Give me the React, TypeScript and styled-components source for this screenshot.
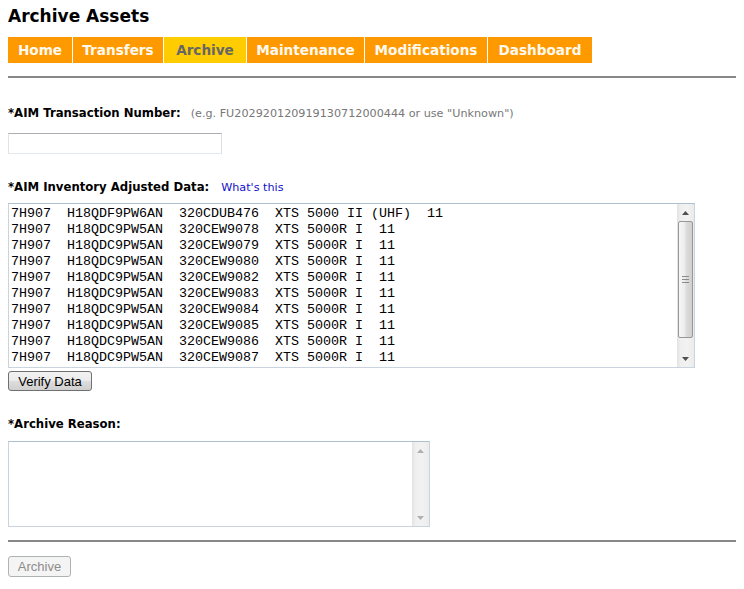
import React from "react";
import styled, { createGlobalStyle } from "styled-components";

const GlobalStyle = createGlobalStyle`
  html, body { background: #ffffff; }
  body {
    margin: 8px;
    font-family: "DejaVu Sans", Verdana, sans-serif;
    color: #000;
  }
`;

const Page = styled.div`
  display: flex;
  flex-direction: column;
  align-items: flex-start;
`;

const Title = styled.h1`
  margin: 0;
  font-size: 17px;
  line-height: 16px;
  font-weight: bold;
`;

const Nav = styled.nav`
  display: flex;
  margin-top: 13px;
  gap: 1px;
  background: #ffffff;
`;

const NavItem = styled.a<{ $active?: boolean; $w: number }>`
  display: block;
  width: ${(p) => p.$w}px;
  box-sizing: border-box;
  text-align: center;
  height: 26px;
  line-height: 26px;
  font-size: 13.6px;
  font-weight: bold;
  text-decoration: none;
  background: ${(p) => (p.$active ? "#ffcc00" : "#ff9900")};
  color: ${(p) => (p.$active ? "#666666" : "#fffaf0")};
  white-space: nowrap;
`;

const Rule = styled.div<{ $top: number }>`
  align-self: stretch;
  height: 2px;
  background: #888888;
  margin-top: ${(p) => p.$top}px;
`;

const Label = styled.div<{ $top: number }>`
  display: flex;
  align-items: baseline;
  margin-top: ${(p) => p.$top}px;
  height: 16px;
  line-height: 16px;
`;

const LabelText = styled.span`
  font-weight: bold;
  font-size: 11.7px;
`;

const Hint = styled.span`
  margin-left: 10px;
  color: #777777;
  font-size: 11.2px;
`;

const HelpLink = styled.a`
  margin-left: 12px;
  color: #1010c8;
  text-decoration: none;
  font-size: 11.2px;
`;

const TextInput = styled.input`
  margin-top: 12px;
  width: 214px;
  height: 21px;
  box-sizing: border-box;
  padding: 1px 2px;
  border: 1px solid;
  border-color: #abadb3 #dbdfe6 #e3e9ef #e2e3ea;
  background: #fff;
  outline: none;
  font-family: "DejaVu Sans", sans-serif;
  font-size: 11px;
`;

const ScrollField = styled.div<{ $w: number; $h: number; $top: number }>`
  display: flex;
  margin-top: ${(p) => p.$top}px;
  width: ${(p) => p.$w}px;
  height: ${(p) => p.$h}px;
  box-sizing: border-box;
  border: 1px solid;
  border-color: #aebfcf #c9d4de #c9d4de #c9d4de;
  background: #fff;
`;

const Area = styled.textarea`
  flex: 1;
  min-width: 0;
  margin: 0;
  border: none;
  padding: 2px;
  resize: none;
  overflow: hidden;
  outline: none;
  background: transparent;
  white-space: pre;
  font-family: "Liberation Mono", "Courier New", monospace;
  font-size: 13.33px;
  line-height: 16px;
  color: #000;
`;

const ScrollBar = styled.div`
  width: 17px;
  flex: none;
  display: flex;
  flex-direction: column;
  background: linear-gradient(to right, #e2e2e2, #efefef 20%, #f2f2f2 60%, #ebebeb);
`;

const ScrollButton = styled.div`
  height: 17px;
  flex: none;
  display: flex;
  align-items: center;
  justify-content: center;
`;

const Track = styled.div`
  flex: 1;
  display: flex;
  flex-direction: column;
`;

const Thumb = styled.div<{ $size: number }>`
  height: ${(p) => p.$size}px;
  margin: 0 1px;
  box-sizing: border-box;
  border: 1px solid #979797;
  border-radius: 2px;
  background: linear-gradient(to right, #f6f6f6, #ececec 45%, #dcdcdc 55%, #d0d0d0);
  display: flex;
  align-items: center;
  justify-content: center;
`;

const Button = styled.button<{ $top: number; $w: number; $h: number }>`
  margin-top: ${(p) => p.$top}px;
  width: ${(p) => p.$w}px;
  height: ${(p) => p.$h}px;
  padding: 0;
  box-sizing: border-box;
  border: 1px solid #707070;
  border-radius: 3px;
  background: linear-gradient(#f2f2f2, #ebebeb 48%, #dddddd 52%, #cfcfcf);
  font-family: "Liberation Sans", Arial, sans-serif;
  font-size: 13px;
  color: #000;

  &:disabled {
    border-color: #adb2b5;
    background: #f4f4f4;
    color: #8c8c8c;
  }
`;

function Arrow({ up, color }: { up?: boolean; color: string }) {
  return (
    <svg width="7" height="4" viewBox="0 0 7 4">
      <path d={up ? "M0 4 L3.5 0 L7 4 Z" : "M0 0 L3.5 4 L7 0 Z"} fill={color} />
    </svg>
  );
}

function Grip() {
  return (
    <svg width="7" height="7" viewBox="0 0 7 7">
      <path d="M0 0.5H7M0 3.5H7M0 6.5H7" stroke="#8a8a8a" strokeWidth="1" />
    </svg>
  );
}

function ScrollArea({
  w,
  h,
  top,
  thumb,
  value,
}: {
  w: number;
  h: number;
  top: number;
  thumb?: number;
  value?: string;
}) {
  const arrowColor = thumb ? "#4f4f4f" : "#b0b0b0";
  return (
    <ScrollField $w={w} $h={h} $top={top}>
      <Area defaultValue={value} wrap="off" spellCheck={false} />
      <ScrollBar>
        <ScrollButton>
          <Arrow up color={arrowColor} />
        </ScrollButton>
        <Track>
          {thumb ? (
            <Thumb $size={thumb}>
              <Grip />
            </Thumb>
          ) : null}
        </Track>
        <ScrollButton>
          <Arrow color={arrowColor} />
        </ScrollButton>
      </ScrollBar>
    </ScrollField>
  );
}

const navItems: { label: string; w: number; active?: boolean }[] = [
  { label: "Home", w: 64 },
  { label: "Transfers", w: 90 },
  { label: "Archive", w: 82, active: true },
  { label: "Maintenance", w: 117 },
  { label: "Modifications", w: 122 },
  { label: "Dashboard", w: 104 },
];

const serials = ["9078", "9079", "9080", "9082", "9083", "9084", "9085", "9086", "9087", "9088"];
const data = [
  "7H907  H18QDF9PW6AN  320CDUB476  XTS 5000 II (UHF)  11",
  ...serials.map((s) => `7H907  H18QDC9PW5AN  320CEW${s}  XTS 5000R I  11`),
].join("\n");

export default function App() {
  return (
    <>
      <GlobalStyle />
      <Page>
        <Title>Archive Assets</Title>
        <Nav>
          {navItems.map((n) => (
            <NavItem key={n.label} href="#" $w={n.w} $active={n.active}>
              {n.label}
            </NavItem>
          ))}
        </Nav>
        <Rule $top={13} />

        <Label $top={27}>
          <LabelText>*AIM Transaction Number:</LabelText>
          <Hint>(e.g. FU202920120919130712000444 or use "Unknown")</Hint>
        </Label>
        <TextInput type="text" />

        <Label $top={25}>
          <LabelText>*AIM Inventory Adjusted Data:</LabelText>
          <HelpLink href="#">What's this</HelpLink>
        </Label>
        <ScrollArea top={8} w={687} h={165} thumb={117} value={data} />
        <Button $top={3} $w={84} $h={20}>
          Verify Data
        </Button>

        <Label $top={25}>
          <LabelText>*Archive Reason:</LabelText>
        </Label>
        <ScrollArea top={9} w={422} h={86} />

        <Rule $top={13} />
        <Button $top={14} $w={63} $h={21} disabled>
          Archive
        </Button>
      </Page>
    </>
  );
}
